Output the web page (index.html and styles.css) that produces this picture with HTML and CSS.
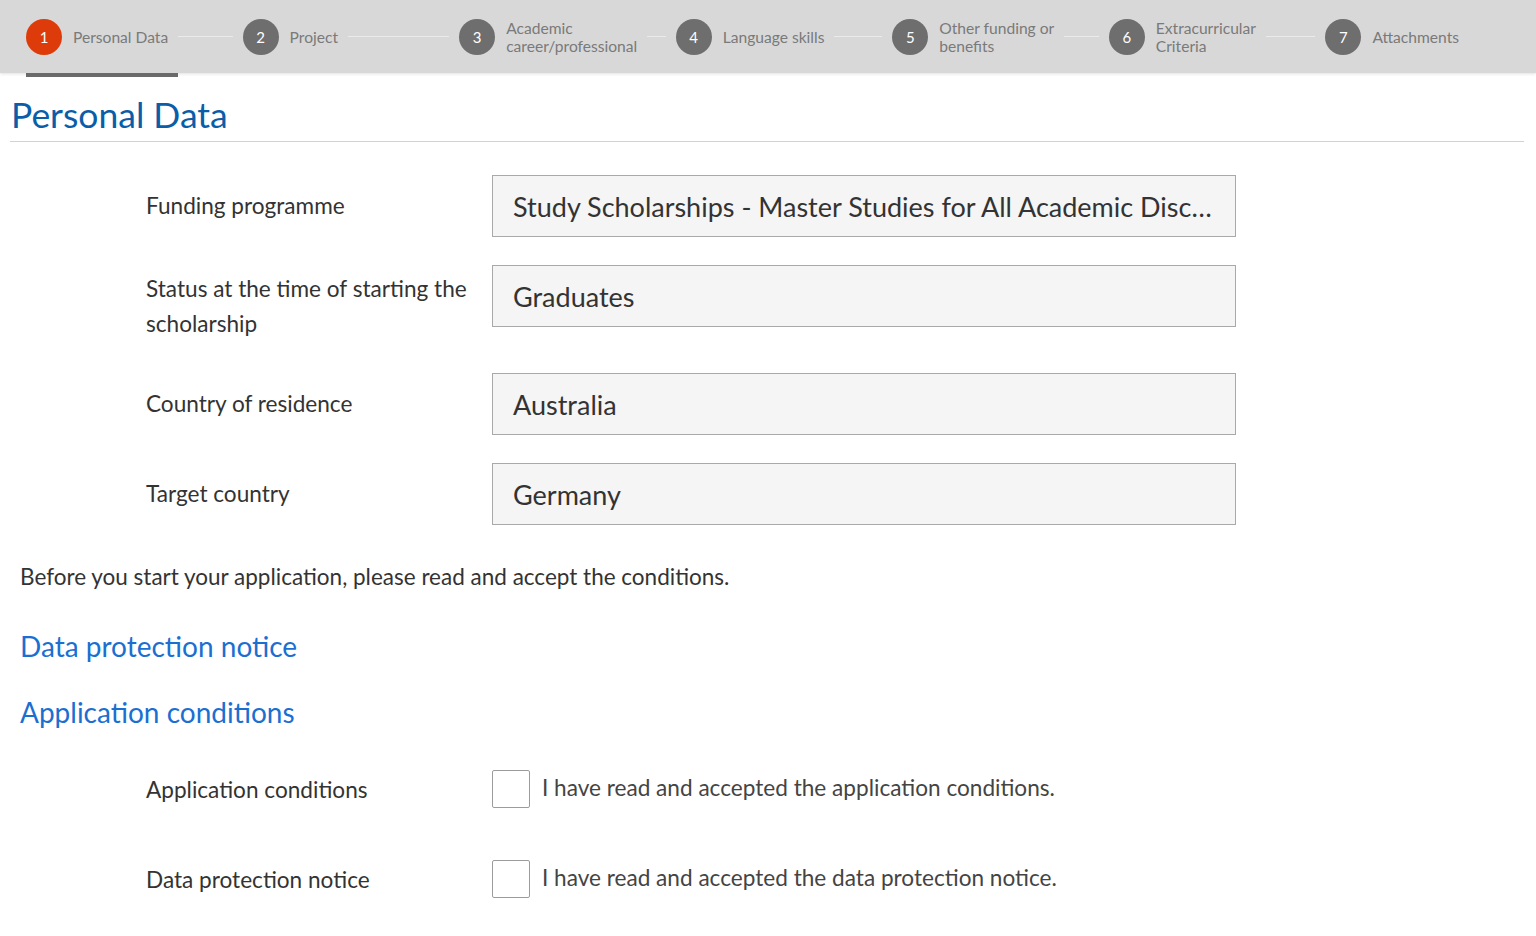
FILE: index.html
```html
<!DOCTYPE html>
<html lang="en">
<head>
<meta charset="utf-8">
<title>Personal Data</title>
<link rel="stylesheet" href="styles.css">
</head>
<body>
<header class="stepbar">
  <nav class="steps">
    <div class="step active"><div class="head"><span class="num">1</span><span class="label">Personal Data</span></div><span class="line"></span></div>
    <div class="step"><div class="head"><span class="num">2</span><span class="label">Project</span></div><span class="line"></span></div>
    <div class="step"><div class="head"><span class="num">3</span><span class="label">Academic<br>career/professional</span></div><span class="line"></span></div>
    <div class="step"><div class="head"><span class="num">4</span><span class="label">Language skills</span></div><span class="line"></span></div>
    <div class="step"><div class="head"><span class="num">5</span><span class="label">Other funding or<br>benefits</span></div><span class="line"></span></div>
    <div class="step"><div class="head"><span class="num">6</span><span class="label">Extracurricular<br>Criteria</span></div><span class="line"></span></div>
    <div class="step last"><div class="head"><span class="num">7</span><span class="label">Attachments</span></div></div>
  </nav>
</header>
<main class="content">
  <h1 class="title">Personal Data</h1>
  <section class="form">
    <div class="row"><div class="flabel">Funding programme</div><div class="field">Study Scholarships - Master Studies for All Academic Disc…</div></div>
    <div class="row tall"><div class="flabel">Status at the time of starting the scholarship</div><div class="field">Graduates</div></div>
    <div class="row"><div class="flabel">Country of residence</div><div class="field">Australia</div></div>
    <div class="row"><div class="flabel">Target country</div><div class="field">Germany</div></div>
  </section>
  <p class="intro">Before you start your application, please read and accept the conditions.</p>
  <h2 class="link">Data protection notice</h2>
  <h2 class="link second">Application conditions</h2>
  <section class="checks">
    <div class="crow"><div class="flabel">Application conditions</div><label class="check"><span class="box"></span><span class="ctext">I have read and accepted the application conditions.</span></label></div>
    <div class="crow"><div class="flabel">Data protection notice</div><label class="check"><span class="box"></span><span class="ctext">I have read and accepted the data protection notice.</span></label></div>
  </section>
</main>
</body>
</html>
```
FILE: styles.css
```css
* { box-sizing: border-box; }
html, body { margin: 0; padding: 0; }
body {
  font-family: Lato, "Open Sans", sans-serif;
  color: #333;
  background: #fff;
}
.stepbar {
  background: #d8d8d8;
  height: 73px;
  box-shadow: 0 1px 3px rgba(0,0,0,0.12);
  position: relative;
}
.steps {
  display: flex;
  height: 100%;
  padding-left: 26px;
}
.step {
  flex: 0 0 216.57px;
  display: flex;
  align-items: center;
}
.head {
  display: flex;
  align-items: center;
  height: 100%;
  position: relative;
  padding-right: 10px;
}
.step.active .head::after {
  content: "";
  position: absolute;
  left: 0;
  right: 0;
  bottom: -4px;
  height: 4px;
  background: #6a6a6a;
}
.num {
  width: 36px;
  height: 36px;
  border-radius: 50%;
  background: #6e6e6e;
  color: #fff;
  display: flex;
  align-items: center;
  justify-content: center;
  font-size: 15px;
  flex: 0 0 36px;
}
.step.active .num { background: #de3b0b; }
.label {
  margin-left: 11px;
  font-size: 15.6px;
  line-height: 18px;
  color: #7a7a7a;
  white-space: nowrap;
}
.line {
  flex: 1;
  height: 1px;
  background: #ebebeb;
  margin-right: 10px;
}
.content {
  padding: 0 12px 0 10px;
}
.title {
  margin: 0;
  padding: 19px 0 3px 1px;
  font-weight: 400;
  font-size: 35.5px;
  line-height: 46px;
  color: #0a5ea9;
  border-bottom: 1px solid #d2d2d2;
}
.form {
  padding: 33px 0 0 136px;
}
.row {
  display: flex;
  align-items: flex-start;
  margin-bottom: 28px;
}
.row.tall { margin-bottom: 32px; }
.flabel {
  flex: 0 0 346px;
  padding-top: 13px;
  padding-right: 10px;
  font-size: 22.6px;
  line-height: 35px;
  color: #333;
}
.row.tall .flabel { padding-top: 6px; }
.field {
  width: 744px;
  height: 62px;
  border: 1px solid #a9a9a9;
  background: #f5f5f5;
  padding: 0 20px;
  display: flex;
  align-items: center;
  font-size: 27px;
  color: #333;
  white-space: nowrap;
  overflow: hidden;
}
.intro {
  margin: 37px 0 0 10px;
  font-size: 22.5px;
  line-height: 30px;
  color: #333;
}
.link {
  margin: 37px 0 0 10px;
  font-weight: 400;
  font-size: 28px;
  line-height: 34px;
  color: #1a6fd1;
}
.link.second { margin-top: 32px; }
.checks {
  padding: 41px 0 0 136px;
}
.crow {
  display: flex;
  align-items: flex-start;
  margin-bottom: 52px;
}
.crow:last-child { margin-bottom: 20px; }
.crow .flabel { padding-top: 2px; }
.check {
  display: flex;
  align-items: center;
}
.box {
  width: 38px;
  height: 38px;
  border: 1px solid #9c9c9c;
  border-radius: 2px;
  background: #fff;
  flex: 0 0 38px;
}
.ctext {
  margin-left: 12px;
  font-size: 22.6px;
  color: #444;
  margin-top: -4px;
}
```
